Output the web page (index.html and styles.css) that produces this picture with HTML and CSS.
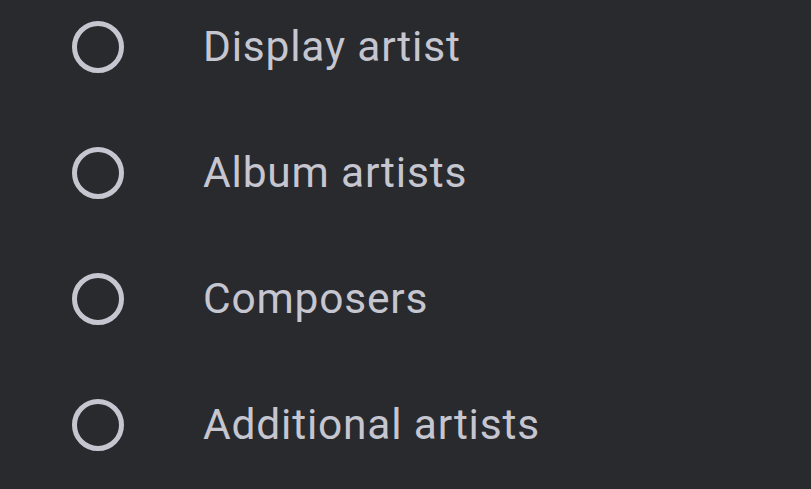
FILE: index.html
```html
<!DOCTYPE html>
<html lang="en">
<head>
    <meta charset="UTF-8">
    <title>Artist tags</title>
    <link rel="stylesheet" href="styles.css">
</head>
<body>
    <ul class="options">
        <li class="option"><span class="radio"></span><span class="label">Display artist</span></li>
        <li class="option"><span class="radio"></span><span class="label">Album artists</span></li>
        <li class="option"><span class="radio"></span><span class="label">Composers</span></li>
        <li class="option"><span class="radio"></span><span class="label">Additional artists</span></li>
    </ul>
</body>
</html>
```

FILE: styles.css
```css
body {
    margin: 0;
    background-color: #292a2e;
    font-family: Roboto, "Liberation Sans", sans-serif;
    overflow: hidden;
}

.options {
    list-style: none;
    margin: -16px 0 0;
    padding: 0;
}

.option {
    display: flex;
    align-items: center;
    height: 126px;
    padding-left: 72px;
}

.radio {
    width: 42px;
    height: 42px;
    border: 5px solid #c5c6d0;
    border-radius: 50%;
    flex-shrink: 0;
}

.label {
    margin-left: 79px;
    margin-top: -2px;
    font-size: 42.5px;
    color: #c5c6d0;
    letter-spacing: 0.8px;
}
```
